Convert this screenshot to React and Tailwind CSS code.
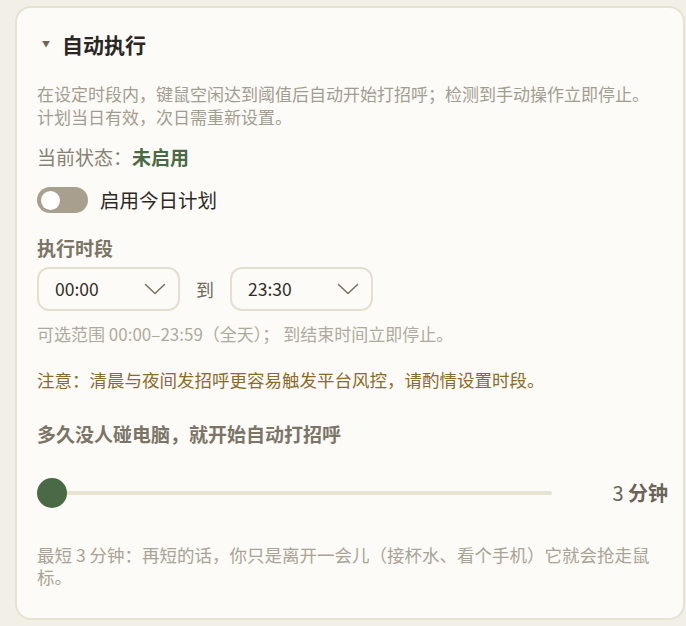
import React from "react";

const font = { fontFamily: '"Noto Sans CJK SC", "Noto Sans", sans-serif' };

function Chevron() {
  return (
    <svg width="22" height="12" viewBox="0 0 22 12" fill="none">
      <path d="M1.5 1.5 L11 10.5 L20.5 1.5" stroke="#7a7468" strokeWidth="1.6" strokeLinecap="round" strokeLinejoin="round" />
    </svg>
  );
}

function Select({ value }) {
  return (
    <div className="flex h-[44px] w-[143px] items-center justify-between rounded-[12px] border-2 border-[#e4dfd0] bg-[#fcfbf7] pl-[16px] pr-[12px]">
      <span className="text-[17.5px] text-[#2f2c27]">{value}</span>
      <Chevron />
    </div>
  );
}

export default function App() {
  return (
    <div className="h-[626px] w-[686px] overflow-hidden bg-[#f2efe7] pl-[15px] pt-[6px]" style={font}>
      <div className="h-[614px] w-[670px] rounded-[16px] border-2 border-[#e7e1d2] bg-[#fcfbf7] pl-[20px] pr-[15px]">
        <div className="mt-[22px] flex h-[28px] items-center">
          <span className="ml-[5px] text-[8px] text-[#6b6458]">▼</span>
          <span className="ml-[12px] text-[21px] font-bold leading-[28px] text-[#2a2723]">自动执行</span>
        </div>
        <p className="mt-[24px] text-[17px] leading-[23px] text-[#a39d90]">
          在设定时段内，键鼠空闲达到阈值后自动开始打招呼；检测到手动操作立即停止。
          <br />
          计划当日有效，次日需重新设置。
        </p>
        <div className="mt-[16px] flex h-[26px] items-center text-[19px] leading-[26px]">
          <span className="text-[#878174]">当前状态：</span>
          <span className="font-bold text-[#4a6a46]">未启用</span>
        </div>
        <div className="mt-[16px] flex h-[28px] items-center">
          <div className="flex h-[26px] w-[51px] items-center rounded-full bg-[#a89f8e] px-[4px]">
            <div className="h-[19px] w-[19px] rounded-full bg-white" />
          </div>
          <span className="ml-[12px] text-[19.5px] text-[#2c2925]">启用今日计划</span>
        </div>
        <div className="mt-[22px] h-[24px] text-[19px] font-bold leading-[24px] text-[#7b7467]">执行时段</div>
        <div className="mt-[7px] flex items-center">
          <Select value="00:00" />
          <span className="mx-[16px] text-[18px] text-[#6f695d]">到</span>
          <Select value="23:30" />
        </div>
        <p className="mt-[12px] text-[17px] leading-[22px] text-[#b0aa9d]">
          可选范围 00:00–23:59（全天）； 到结束时间立即停止。
        </p>
        <p className="mt-[24px] text-[17.5px] leading-[22px] text-[#8a6b2c]">
          注意：清晨与夜间发招呼更容易触发平台风控，请酌情设置时段。
        </p>
        <div className="mt-[31px] h-[24px] text-[19px] font-bold leading-[24px] text-[#7b7467]">
          多久没人碰电脑，就开始自动打招呼
        </div>
        <div className="mt-[32px] flex h-[30px] items-center">
          <div className="relative flex h-[30px] w-[515px] items-center">
            <div className="h-[4px] w-full rounded-full bg-[#e8e2d3]" />
            <div className="absolute left-0 top-0 h-[30px] w-[30px] rounded-full bg-[#4a6a46]" />
          </div>
          <div className="ml-auto text-[20px] text-[#6b6458]">
            <span>3 </span>
            <span className="font-bold">分钟</span>
          </div>
        </div>
        <p className="mt-[36px] w-[620px] text-[17.5px] leading-[22px] text-[#aaa396]">
          最短 3 分钟：再短的话，你只是离开一会儿（接杯水、看个手机）它就会抢走鼠标。
        </p>
      </div>
    </div>
  );
}
